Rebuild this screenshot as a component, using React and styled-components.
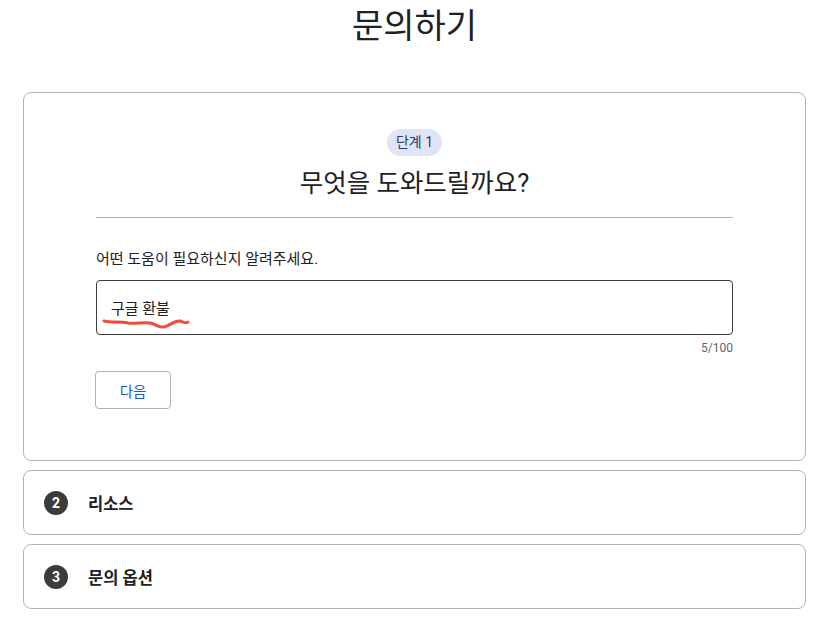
import React from "react";
import styled, { createGlobalStyle } from "styled-components";

const GlobalStyle = createGlobalStyle`
  body {
    margin: 0;
    background: #ffffff;
    font-family: Roboto, "Noto Sans CJK KR", sans-serif;
    color: #202124;
  }
`;

const Page = styled.div`
  padding: 0 28px 0 23px;
`;

const Title = styled.h1`
  margin: 0;
  height: 92px;
  padding-top: 4px;
  box-sizing: border-box;
  text-align: center;
  font-size: 34px;
  font-weight: 400;
  line-height: 44px;
  color: #202124;
`;

const Stack = styled.div`
  display: flex;
  flex-direction: column;
  gap: 9px;
`;

const Card = styled.section`
  border: 1px solid #b4b4b4;
  border-radius: 8px;
  background: #fff;
`;

const StepBody = styled.div`
  padding: 36px 72px 51px 72px;
  display: flex;
  flex-direction: column;
`;

const Chip = styled.span`
  align-self: center;
  background: #dfe4f6;
  color: #2e3a6a;
  font-size: 14px;
  line-height: 27px;
  height: 27px;
  padding: 0 9px;
  border-radius: 14px;
`;

const Heading = styled.h2`
  margin: 10px 0 0;
  text-align: center;
  font-size: 25.5px;
  font-weight: 400;
  line-height: 34px;
  color: #202124;
`;

const Divider = styled.hr`
  margin: 17px 0 0;
  border: none;
  border-top: 1px solid #b0b0b0;
`;

const Label = styled.label`
  margin-top: 31px;
  font-size: 15px;
  line-height: 20px;
  color: #202124;
`;

const InputBox = styled.div`
  position: relative;
  margin-top: 11px;
  height: 55px;
  box-sizing: border-box;
  border: 1px solid #3c3c3c;
  border-radius: 4px;
  display: flex;
  align-items: center;
  padding: 0 14px;
  font-size: 15px;
  color: #202124;
`;

const Squiggle = styled.svg`
  position: absolute;
  left: 5px;
  top: 35px;
  width: 90px;
  height: 14px;
`;

const Counter = styled.div`
  margin-top: 5px;
  text-align: right;
  font-size: 12px;
  line-height: 16px;
  color: #5f6368;
`;

const NextButton = styled.button`
  margin-top: 15px;
  margin-left: -1px;
  align-self: flex-start;
  width: 76px;
  height: 38px;
  background: #fff;
  border: 1px solid #b0b0b0;
  border-radius: 4px;
  font-family: inherit;
  font-size: 14.5px;
  color: #1a5bc4;
`;

const StepRow = styled.div`
  height: 63px;
  display: flex;
  align-items: center;
  gap: 20px;
  padding-left: 20px;
`;

const StepNum = styled.span`
  width: 24px;
  height: 24px;
  border-radius: 50%;
  background: #3c3c3c;
  color: #fff;
  font-size: 14px;
  font-weight: 700;
  display: flex;
  align-items: center;
  justify-content: center;
`;

const StepName = styled.span`
  font-size: 16.5px;
  font-weight: 700;
  color: #202124;
`;

export default function App() {
  return (
    <Page>
      <GlobalStyle />
      <Title>문의하기</Title>
      <Stack>
        <Card>
          <StepBody>
            <Chip>단계 1</Chip>
            <Heading>무엇을 도와드릴까요?</Heading>
            <Divider />
            <Label>어떤 도움이 필요하신지 알려주세요.</Label>
            <InputBox>
              구글 환불
              <Squiggle viewBox="0 0 90 14">
                <path
                  d="M2 5 C10 7 18 5 26 7 C34 8 40 6 48 7 C54 8 57 12 62 11 C68 10 72 4 78 5 C82 6 84 8 86 6"
                  fill="none"
                  stroke="#f44a3b"
                  strokeWidth="3"
                  strokeLinecap="round"
                />
              </Squiggle>
            </InputBox>
            <Counter>5/100</Counter>
            <NextButton>다음</NextButton>
          </StepBody>
        </Card>
        <Card>
          <StepRow>
            <StepNum>2</StepNum>
            <StepName>리소스</StepName>
          </StepRow>
        </Card>
        <Card>
          <StepRow>
            <StepNum>3</StepNum>
            <StepName>문의 옵션</StepName>
          </StepRow>
        </Card>
      </Stack>
    </Page>
  );
}
